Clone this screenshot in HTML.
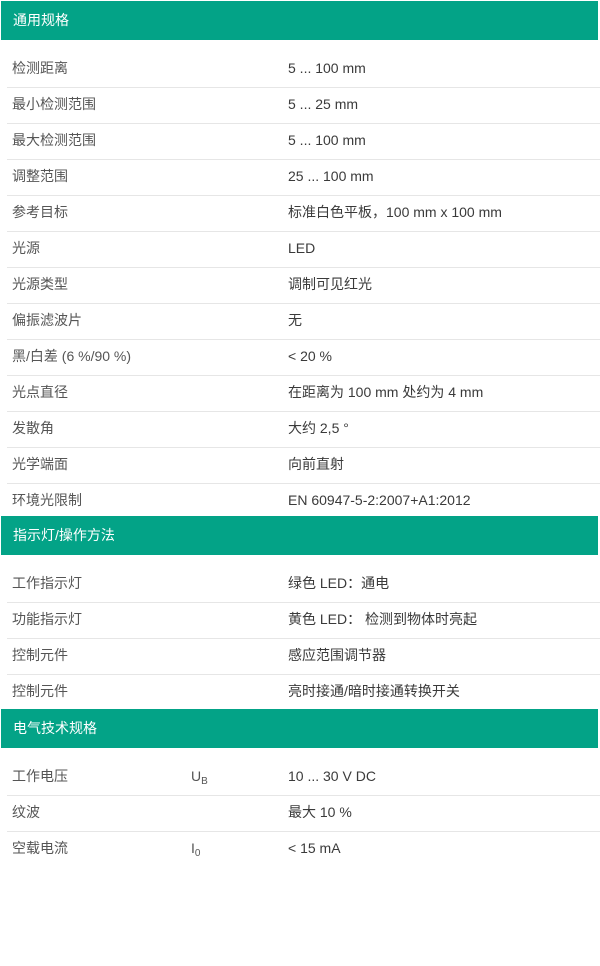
<!DOCTYPE html>
<html><head><meta charset="utf-8"><style>
body{margin:0;width:600px;height:966px;background:#fff;position:relative;font-family:"Liberation Sans","Noto Sans CJK SC",sans-serif;font-size:14px;color:#555;overflow:hidden}
.h{position:absolute;left:1px;width:597px;height:39px;background:#03a387;color:#fff;line-height:39px;padding-left:12px;box-sizing:border-box;font-size:14px}
.r{position:absolute;left:7px;width:593px;height:36px;line-height:36px}
.r.b{border-top:1px solid #e6e6e6;line-height:33px}
.r span{position:absolute;top:0}
.k{left:5px}.s{left:184px}.v{left:281px;color:#3a3a3a}
sub{font-size:10px;vertical-align:-3px}
</style></head><body>
<div class="h" style="top:1px">通用规格</div>
<div class="r" style="top:50px"><span class="k">检测距离</span><span class="v">5 ... 100 mm</span></div>
<div class="r b" style="top:87px"><span class="k">最小检测范围</span><span class="v">5 ... 25 mm</span></div>
<div class="r b" style="top:123px"><span class="k">最大检测范围</span><span class="v">5 ... 100 mm</span></div>
<div class="r b" style="top:159px"><span class="k">调整范围</span><span class="v">25 ... 100 mm</span></div>
<div class="r b" style="top:195px"><span class="k">参考目标</span><span class="v">标准白色平板，100 mm x 100 mm</span></div>
<div class="r b" style="top:231px"><span class="k">光源</span><span class="v">LED</span></div>
<div class="r b" style="top:267px"><span class="k">光源类型</span><span class="v">调制可见红光</span></div>
<div class="r b" style="top:303px"><span class="k">偏振滤波片</span><span class="v">无</span></div>
<div class="r b" style="top:339px"><span class="k">黑/白差 (6 %/90 %)</span><span class="v">&lt; 20 %</span></div>
<div class="r b" style="top:375px"><span class="k">光点直径</span><span class="v">在距离为 100 mm 处约为 4 mm</span></div>
<div class="r b" style="top:411px"><span class="k">发散角</span><span class="v">大约 2,5 °</span></div>
<div class="r b" style="top:447px"><span class="k">光学端面</span><span class="v">向前直射</span></div>
<div class="r b" style="top:483px"><span class="k">环境光限制</span><span class="v">EN 60947-5-2:2007+A1:2012</span></div>
<div class="h" style="top:516px">指示灯/操作方法</div>
<div class="r" style="top:565px"><span class="k">工作指示灯</span><span class="v">绿色 LED：通电</span></div>
<div class="r b" style="top:602px"><span class="k">功能指示灯</span><span class="v">黄色 LED： 检测到物体时亮起</span></div>
<div class="r b" style="top:638px"><span class="k">控制元件</span><span class="v">感应范围调节器</span></div>
<div class="r b" style="top:674px"><span class="k">控制元件</span><span class="v">亮时接通/暗时接通转换开关</span></div>
<div class="h" style="top:709px">电气技术规格</div>
<div class="r" style="top:758px"><span class="k">工作电压</span><span class="s">U<sub>B</sub></span><span class="v">10 ... 30 V DC</span></div>
<div class="r b" style="top:795px"><span class="k">纹波</span><span class="v">最大 10 %</span></div>
<div class="r b" style="top:831px"><span class="k">空载电流</span><span class="s">I<sub>0</sub></span><span class="v">&lt; 15 mA</span></div>
</body></html>
